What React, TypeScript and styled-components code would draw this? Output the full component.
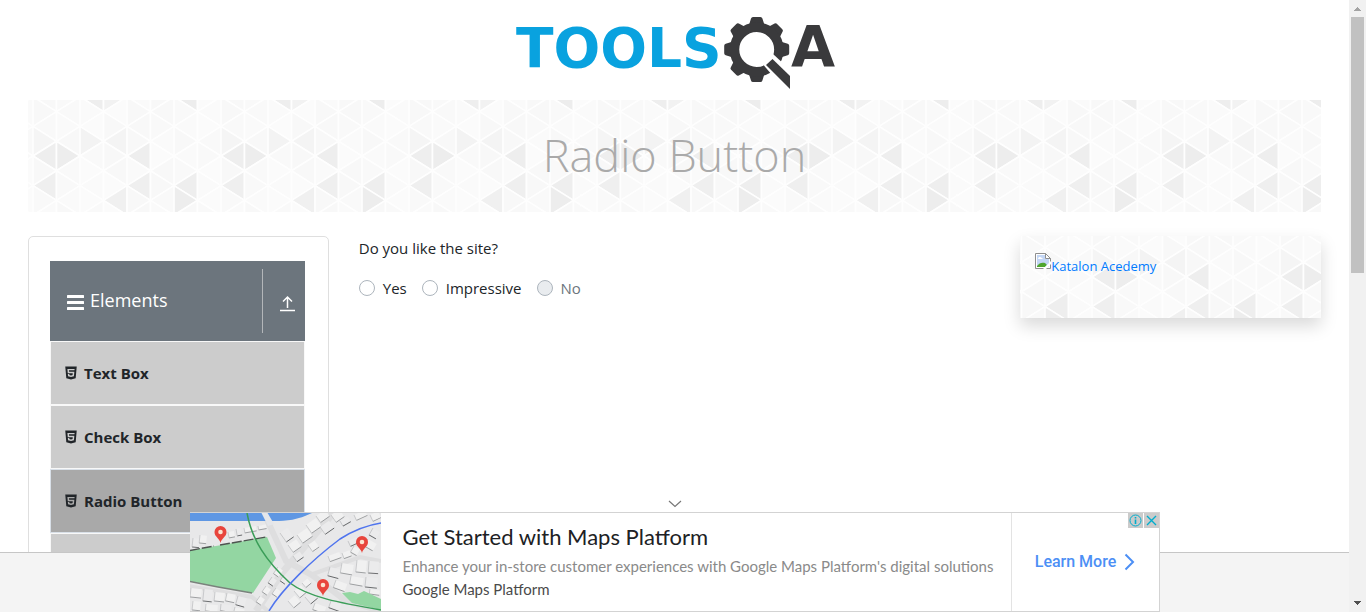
import React from "react";
import styled, { createGlobalStyle } from "styled-components";
import { AiFillHtml5 } from "react-icons/ai";

/* ---------- triangle backdrop ---------- */

const COL = 23.5;
const SIDE = 29.6;
const TILE_W = COL * 8;
const TILE_H = SIDE * 5;

// "column:row:direction" of the darker triangles, rows counted in half sides from the middle
const shades: Record<string, string> = {
  "0:0:l": "#eeeeee",
  "0:2:l": "#efefef",
  "0:-1:r": "#f5f5f5",
  "1:0:r": "#ededed",
  "2:-1:r": "#f3f3f3",
  "2:-4:l": "#eeeeee",
  "3:-4:r": "#f2f2f2",
  "3:-1:l": "#f4f4f4",
  "3:3:l": "#f0f0f0",
  "4:0:l": "#eeeeee",
  "4:2:l": "#efefef",
  "6:2:l": "#eeeeee",
  "6:3:r": "#ededed",
  "6:-4:l": "#ededed",
};
const faint = ["#fafafa", "#f8f8f8", "#fbfbfb", "#f9f9f9", "#f8f8f8"];

function backdrop(): string {
  const shapes: string[] = [];
  for (let c = -2; c < 9; c++) {
    const x1 = 16 + c * COL;
    const x2 = x1 + COL;
    const column = (c + 16) % 8;
    for (let r = -6; r <= 6; r++) {
      const y = TILE_H / 2 + (r * SIDE) / 2;
      const leftVertex = (column + r) % 2 === 0;
      const dir = leftVertex ? "l" : "r";
      const fill =
        shades[`${column}:${r}:${dir}`] || faint[(column * 3 + (r + 6) * 2 + column * r * r) % 5];
      const tip = leftVertex ? x1 : x2;
      const base = leftVertex ? x2 : x1;
      shapes.push(
        `<path d="M${tip} ${y}L${base} ${y - SIDE / 2}V${y + SIDE / 2}Z" fill="${fill}"/>`
      );
    }
  }
  const svg =
    `<svg xmlns="http://www.w3.org/2000/svg" width="${TILE_W}" height="${TILE_H}">` +
    `<g stroke="#fefefe" stroke-width="1.7" stroke-linejoin="round">${shapes.join("")}</g></svg>`;
  return `url("data:image/svg+xml,${encodeURIComponent(svg)}")`;
}
const triangles = backdrop();

/* ---------- page ---------- */

const GlobalStyle = createGlobalStyle`
  *, *::before, *::after { box-sizing: border-box; }
  body {
    margin: 0;
    overflow: hidden;
    background: #fff;
    color: #212529;
    font-family: "Open Sans", "Noto Sans", sans-serif;
    font-size: 15px;
    line-height: 24px;
  }
  a { text-decoration: none; }
  button { font: inherit; cursor: pointer; }
`;

const Shell = styled.div`
  display: grid;
  grid-template-columns: minmax(0, 1fr) 17px;
  height: 100vh;
`;

const Viewport = styled.div`
  position: relative;
  overflow: hidden;
`;

const Header = styled.header`
  display: flex;
  justify-content: center;
  height: 100px;
  padding-top: 14px;
`;

const Body = styled.main`
  padding: 0 28px;
`;

const Banner = styled.div`
  display: flex;
  justify-content: center;
  align-items: center;
  height: 112px;
  margin-bottom: 24px;
  padding-bottom: 2px;
  background: ${triangles} center;
`;

const BannerTitle = styled.h1`
  margin: 0;
  color: #aaa;
  font-size: 45px;
  font-weight: 300;
  line-height: 56px;
`;

const Columns = styled.div`
  display: grid;
  grid-template-columns: repeat(12, minmax(0, 1fr));
  column-gap: 30px;
  align-items: start;
`;

const Sidebar = styled.nav`
  grid-column: span 3;
  padding: 24px 23px 24px 21px;
  border: 1px solid #dfdfdf;
  border-radius: 5px;
`;

const Group = styled.button`
  display: flex;
  align-items: center;
  width: 100%;
  height: 80px;
  padding: 0 9px 0 17px;
  border: 0;
  background: #6c757d;
  color: #fff;
  font-size: 18px;
  text-align: left;
`;

const GroupLabel = styled.span`
  flex: 1;
  padding: 0 0 2px 6px;
`;

const GroupArrow = styled.span`
  display: flex;
  align-items: center;
  height: 64px;
  padding: 4px 0 0 16px;
  border-left: 1px solid #b3b6b9;
`;

const Items = styled.ul`
  margin: 0;
  padding: 0;
  list-style: none;
`;

const Item = styled.a<{ $active?: boolean }>`
  display: flex;
  align-items: center;
  gap: 5px;
  height: 64px;
  padding: 0 12px;
  border: 1px solid ${(p) => (p.$active ? "#d9e0e8" : "#f8f8f8")};
  background: ${(p) => (p.$active ? "#a9a9a9" : "#ccc")};
  color: #212529;
  font-weight: 700;
`;

const Question = styled.fieldset`
  grid-column: span 6;
  margin: 0;
  padding: 0;
  border: 0;
`;

const Legend = styled.legend`
  padding: 0;
  margin-bottom: 16px;
`;

const Options = styled.div`
  display: flex;
  gap: 15px;
`;

const Option = styled.label<{ $muted?: boolean }>`
  display: flex;
  align-items: center;
  gap: 8px;
  color: ${(p) => (p.$muted ? "#6c757d" : "#212529")};
`;

const Radio = styled.input`
  appearance: none;
  width: 16px;
  height: 16px;
  margin: 0;
  border: 1px solid #adb5bd;
  border-radius: 50%;
  background: #fff;
  &:disabled { background: #e9ecef; }
  &:checked { border: 5px solid #007bff; }
`;

const Promo = styled.aside`
  grid-column: span 3;
  height: 82px;
  padding: 17px 15px;
  background: ${triangles} center;
  box-shadow: 0 8px 16px rgba(0, 0, 0, 0.15);
`;

const PromoLink = styled.a`
  display: flex;
  align-items: flex-start;
  color: #007bff;
  font-size: 13px;
  line-height: 26px;
`;

const Footer = styled.footer`
  position: absolute;
  inset: auto 0 0 0;
  height: 60px;
  border-top: 1px solid #c6c6c6;
  background: #f4f4f4;
`;

/* ---------- anchored ad ---------- */

const AdDock = styled.div`
  position: absolute;
  inset: auto 0 0 0;
  display: flex;
  flex-direction: column;
  align-items: center;
`;

const Collapse = styled.button`
  display: flex;
  padding: 4px 8px;
  border: 0;
  background: none;
`;

const Ad = styled.section`
  position: relative;
  display: flex;
  width: 970px;
  max-width: 100%;
  height: 100px;
  border: 1px solid #d3d3d3;
  border-left: 0;
  background: #fff;
  font-family: Lato, "Open Sans", sans-serif;
`;

const AdCopy = styled.div`
  flex: 1;
  padding: 8px 0 0 22px;
  white-space: nowrap;
`;

const AdTitle = styled.h2`
  margin: 0 0 3px;
  color: #202124;
  font-size: 22px;
  font-weight: 400;
  line-height: 32px;
`;

const AdText = styled.p<{ $dark?: boolean }>`
  margin: 0 0 3px;
  color: ${(p) => (p.$dark ? "#4a4a4a" : "#8a8a8a")};
  font-size: 15px;
  line-height: 20px;
`;

const AdAction = styled.a`
  display: flex;
  align-items: center;
  justify-content: center;
  gap: 8px;
  width: 148px;
  border-left: 1px solid #e3e3e3;
  color: #4c8ff5;
  font-family: Roboto, sans-serif;
  font-size: 16px;
  font-weight: 500;
`;

const AdBadges = styled.div`
  position: absolute;
  top: 0;
  right: 0;
  display: flex;
  gap: 1px;
`;

const AdBadge = styled.button`
  display: flex;
  width: 15px;
  height: 15px;
  padding: 0;
  border: 0;
  background: #cbcbcb;
`;

/* ---------- scrollbar ---------- */

const Scrollbar = styled.div`
  display: flex;
  flex-direction: column;
  align-items: center;
  background: #f1f1f1;
`;

const Thumb = styled.div`
  width: 13px;
  height: 256px;
  margin-bottom: auto;
  background: #c1c1c1;
`;

const ScrollArrow = ({ down }: { down?: boolean }) => (
  <svg width="17" height="17" viewBox="0 0 17 17" shapeRendering="crispEdges">
    <path d={down ? "M5 6h7l-3.500 4z" : "M5 11h7l-3.500-4z"} fill={down ? "#505050" : "#a3a3a3"} />
  </svg>
);

/* ---------- drawings ---------- */

const Logo = () => (
  <svg width="326" height="78" viewBox="512 14 326 78" role="img" aria-label="TOOLSQA">
    <g fontFamily="DejaVu Sans" fontWeight="700">
      <text x="516" y="67" fontSize="55" fill="#09a2df">TOOLS</text>
      <text x="791" y="67" fontSize="57" fill="#3a3a3c">A</text>
    </g>
    <g fill="#3a3a3c">
      {[0, 45, 90, 180, 225, 270, 315].map((a) => (
        <path
          key={a}
          d="M749 25 L751 18.500 Q751.500 17 753 17 H760.400 Q762 17 762.400 18.500 L764.500 25 Z"
          transform={`rotate(${a} 756.700 49.500)`}
        />
      ))}
      <circle cx="756.700" cy="49.500" r="22.200" fill="none" stroke="#3a3a3c" strokeWidth="9.500" />
      <path d="M761 62 L773 54 L800 79 L790 96 Z" fill="#fff" />
      <path d="M766 65 L772.500 59 L790 76 V89 Z" />
    </g>
  </svg>
);

const MenuIcon = () => (
  <svg width="17" height="18" viewBox="0 0 17 18" fill="#fff">
    <rect y="3" width="17" height="3" rx="0.500" />
    <rect y="9" width="17" height="3" rx="0.500" />
    <rect y="15" width="17" height="3" rx="0.500" />
  </svg>
);

const UploadIcon = () => (
  <svg width="17" height="17" viewBox="0 0 17 17" fill="none" stroke="#fff" strokeWidth="1.500">
    <path d="M8.500 13V2M4 6.500 8.500 2 13 6.500M1 15.500h15" />
  </svg>
);

const BrokenImage = () => (
  <svg width="16" height="16" viewBox="0 0 16 16" aria-hidden="true">
    <path d="M.5.5h10l5 5v10H.5z" fill="#fff" stroke="#8f8f8f" />
    <path d="M2 2h8v4h4v8H2z" fill="#c3d6f5" />
    <path d="M3 6c0-1.500 1-2 2-2s2 1 3 2z" fill="#fff" />
    <path d="M2 14v-1c2-3 5-4 8-3l2 2-2 2z" fill="#4fa62f" />
    <path d="M10.500.5v5h5z" fill="#fff" stroke="#8f8f8f" />
    <path d="M8 16l8-8v3l-5 5z" fill="#fff" />
  </svg>
);

const Pin = ({ x, y }: { x: number; y: number }) => (
  <g transform={`translate(${x} ${y})`}>
    <path d="M0 0C-1-5-6-6-6-11a6 6 0 0 1 12 0C6-6 1-5 0 0z" fill="#e8453c" />
    <circle cy="-11" r="2.300" fill="#fbe3d0" />
  </g>
);

// x, y, width, height, turn of each house
const houses: number[][] = [
  [3, 25, 7, 9, 6], [10, 22, 7, 8, 6], [38, 19, 6, 6, -10], [46, 16, 5, 7, -10], [54, 15, 12, 5, -10], [68, 13, 8, 4, -10],
  [90, 20, 9, 11, -35], [98, 32, 10, 9, -35], [107, 22, 12, 10, -35], [103, 43, 8, 7, -35],
  [116, 12, 12, 10, -35], [126, 3, 11, 8, -35], [130, 14, 11, 9, -35], [141, 2, 10, 9, -35], [118, 32, 8, 8, -35],
  [150, 8, 9, 6, -30], [164, 2, 12, 6, -25], [180, 2, 9, 7, -25], [158, 28, 9, 6, -25], [164, 33, 7, 7, 30],
  [178, 26, 10, 8, 30], [183, 15, 8, 8, 30], [138, 43, 12, 6, -20], [152, 40, 8, 6, -20],
  [140, 54, 11, 9, 15], [152, 50, 12, 10, 10], [167, 47, 10, 12, 6], [179, 48, 10, 12, 4], [146, 67, 12, 8, 20],
  [161, 63, 13, 8, 10], [176, 64, 12, 10, 6], [180, 76, 10, 5, 8],
  [1, 75, 11, 9, 6], [14, 76, 9, 12, 6], [25, 79, 10, 9, 6], [37, 80, 9, 8, 12], [48, 83, 9, 9, 16],
  [3, 88, 8, 9, 6], [16, 91, 12, 7, 6], [31, 91, 11, 7, 6], [45, 94, 10, 5, 14],
  [88, 54, 6, 8, 35], [82, 64, 6, 7, 35], [76, 73, 6, 7, 35], [70, 83, 6, 7, 35], [94, 62, 6, 7, 35], [86, 75, 6, 7, 35],
  [104, 78, 9, 9, -40], [115, 84, 9, 9, -40], [98, 88, 9, 9, -40], [125, 90, 12, 7, 20], [141, 88, 11, 7, 20], [112, 70, 7, 6, -40],
];

const MapPicture = () => (
  <svg width="191" height="98" viewBox="0 0 191 98" role="img" aria-label="Map with three pins">
    <rect width="191" height="98" fill="#e8e8e9" />
    <g stroke="#dededf" fill="none">
      <path d="M74 0 84 22 96 48 122 62 156 88 191 98" strokeWidth="6" />
      <path d="M66 98 92 60 140 4 144-2" strokeWidth="7" />
      <path d="M-2 73 62 84 78 98M120 62 170 44 191 48" strokeWidth="4" />
    </g>
    {houses.map(([x, y, w, h, turn], i) => (
      <g key={i} transform={`rotate(${turn} ${x} ${y})`}>
        <rect x={x} y={y} width={w} height={h} fill={i % 3 ? "#f1f1f1" : "#ebebec"} />
        <path d={`M${x} ${y + h}h${w}`} stroke={i % 3 ? "#999b9d" : "#636567"} strokeWidth="0.900" />
        <path d={`M${x} ${y}v${h}`} stroke="#b4b6b8" strokeWidth="0.600" />
      </g>
    ))}
    <path d="M0 0H122C108 7 96 8 85 8H0Z" fill="#5f97e3" />
    <path d="M71-1 78 13 84 11 77-1Z" fill="#e4e6ea" />
    <path d="M0 37.500 77 24 86 45 63 80 28 74 0 68.500Z" fill="#93d6a2" />
    <path d="M0 37.500 24 33M30 32 76 24" stroke="#4d5450" strokeWidth="1.400" strokeDasharray="10 2" fill="none" />
    <path d="M0 68.500 28 74 62 80" stroke="#7a827c" strokeWidth="1.400" fill="none" />
    <path d="M152 80 160 79 168 81 174 78 191 86V97L162 90Z" fill="#93d6a2" />
    <path d="M57 0C62 27 76 48 100 70 118 84 150 90 191 97" fill="none" stroke="#3a9d58" strokeWidth="1.500" />
    <path d="M79 98C92 76 122 47 150 26 164 17 178 12 191 10" fill="none" stroke="#4f74ee" strokeWidth="1.500" />
    <Pin x={30.5} y={30} />
    <Pin x={172} y={40} />
    <Pin x={133} y={83} />
  </svg>
);

const menu = ["Text Box", "Check Box", "Radio Button", "Web Tables"];

export default function App() {
  return (
    <Shell>
      <GlobalStyle />
      <Viewport>
        <Header>
          <a href="#home"><Logo /></a>
        </Header>
        <Body>
          <Banner>
            <BannerTitle>Radio Button</BannerTitle>
          </Banner>
          <Columns>
            <Sidebar>
              <Group type="button">
                <MenuIcon />
                <GroupLabel>Elements</GroupLabel>
                <GroupArrow><UploadIcon /></GroupArrow>
              </Group>
              <Items>
                {menu.map((name) => (
                  <li key={name}>
                    <Item href="#item" $active={name === "Radio Button"}>
                      <AiFillHtml5 size={16} />
                      {name}
                    </Item>
                  </li>
                ))}
              </Items>
            </Sidebar>
            <Question>
              <Legend>Do you like the site?</Legend>
              <Options>
                <Option><Radio type="radio" name="like" />Yes</Option>
                <Option><Radio type="radio" name="like" />Impressive</Option>
                <Option $muted><Radio type="radio" name="like" disabled />No</Option>
              </Options>
            </Question>
            <Promo>
              <PromoLink href="#academy"><BrokenImage />Katalon Acedemy</PromoLink>
            </Promo>
          </Columns>
        </Body>
        <Footer />
        <AdDock>
          <Collapse type="button" aria-label="Collapse ad">
            <svg width="14" height="8" viewBox="0 0 14 8" fill="none" stroke="#777" strokeWidth="1.200">
              <path d="M1 1l6 5.500L13 1" />
            </svg>
          </Collapse>
          <Ad>
            <MapPicture />
            <AdCopy>
              <AdTitle>Get Started with Maps Platform</AdTitle>
              <AdText>Enhance your in-store customer experiences with Google Maps Platform's digital solutions</AdText>
              <AdText $dark>Google Maps Platform</AdText>
            </AdCopy>
            <AdAction href="#learn">
              Learn More
              <svg width="11" height="18" viewBox="0 0 11 18" fill="none" stroke="#4c8ff5" strokeWidth="2">
                <path d="M1.500 1.500 9 9l-7.500 7.500" />
              </svg>
            </AdAction>
            <AdBadges>
              <AdBadge type="button" aria-label="Ad information">
                <svg width="15" height="15" viewBox="0 0 15 15" fill="none" stroke="#00aecd">
                  <circle cx="7.500" cy="7.500" r="5.500" />
                  <path d="M7.500 6.500v4.500M7.500 4v1.500" strokeWidth="1.600" />
                </svg>
              </AdBadge>
              <AdBadge type="button" aria-label="Close ad">
                <svg width="15" height="15" viewBox="0 0 15 15" fill="none" stroke="#00aecd" strokeWidth="1.400">
                  <path d="M3 3l9 9M12 3l-9 9" />
                </svg>
              </AdBadge>
            </AdBadges>
          </Ad>
        </AdDock>
      </Viewport>
      <Scrollbar>
        <ScrollArrow />
        <Thumb />
        <ScrollArrow down />
      </Scrollbar>
    </Shell>
  );
}
